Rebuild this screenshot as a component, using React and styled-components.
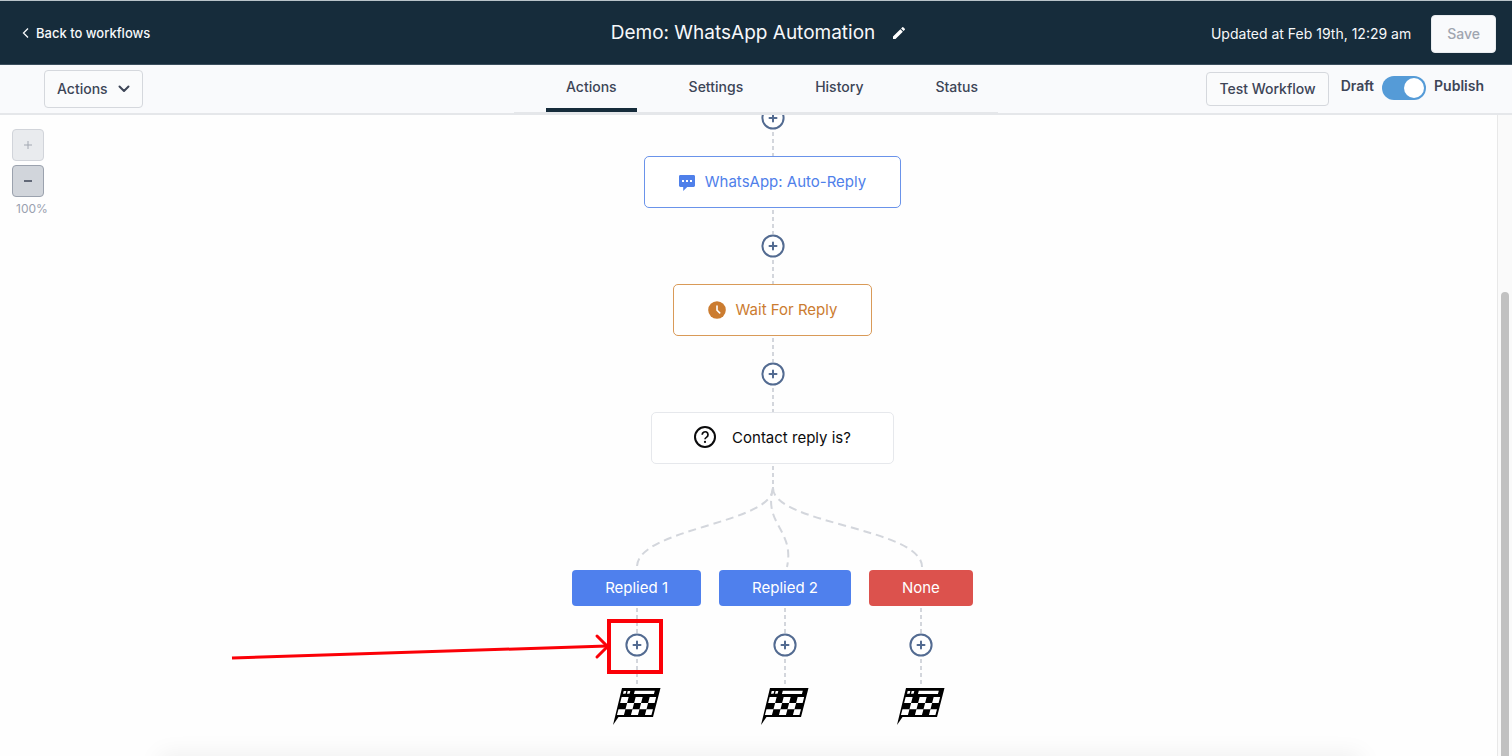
import React, { useState } from "react";
import styled, { createGlobalStyle } from "styled-components";
import { MdEdit } from "react-icons/md";

const GlobalStyle = createGlobalStyle`
  *, *::before, *::after { box-sizing: border-box; }
  body { margin: 0; background: #fefefe; }
  button, input { font: inherit; }
`;

const Page = styled.div`
  display: flex;
  flex-direction: column;
  min-height: 100vh;
  overflow: hidden;
  font-family: Inter, "Liberation Sans", sans-serif;
  font-size: 14px;
  line-height: 20px;
  color: #3d4557;
`;

const Header = styled.header`
  display: grid;
  grid-template-columns: 1fr auto 1fr;
  align-items: center;
  height: 65px;
  padding: 0 16px 0 22px;
  background: #162c3b;
  border-top: 1px solid #b9c3c9;
  border-bottom: 1px solid #3b4f5e;
  color: #f6f8fa;
`;

const BackLink = styled.a`
  display: inline-flex;
  align-items: center;
  gap: 7px;
  justify-self: start;
  color: inherit;
  font-size: 13px;
  font-weight: 500;
  text-decoration: none;
`;

const TitleGroup = styled.div`
  display: flex;
  align-items: center;
  gap: 16px;
`;

const Title = styled.h1`
  margin: 0;
  font-size: 19px;
  line-height: 28px;
  font-weight: 400;
`;

const IconButton = styled.button`
  display: flex;
  padding: 0;
  border: 0;
  background: none;
  color: #fff;
`;

const HeaderEnd = styled.div`
  display: flex;
  align-items: center;
  justify-content: flex-end;
  gap: 20px;
  padding-top: 3px;
`;

const SaveButton = styled.button`
  height: 38px;
  padding: 0 15px;
  border: 1px solid #e9ecef;
  border-radius: 4px;
  background: #f9fafc;
  color: #a0a5b0;
  font-weight: 500;
`;

const Toolbar = styled.div`
  display: grid;
  grid-template-columns: 1fr auto 1fr;
  height: 50px;
  padding: 0 28px;
  background: #f9fafc;
  border-bottom: 2px solid #e5e7ea;
`;

const OutlineButton = styled.button`
  display: flex;
  align-items: center;
  gap: 10px;
  height: ${(p) => p.$height}px;
  padding: 0 12px;
  border: 1px solid #d5d8dd;
  border-radius: 4px;
  background: #fafbfc;
  color: inherit;
  font-weight: 500;
`;

const ToolbarStart = styled.div`
  display: flex;
  align-items: center;
  padding-left: 16px;
`;

const ToolbarEnd = styled.div`
  display: flex;
  align-items: center;
  justify-content: flex-end;
  gap: 12px;
`;

const PublishSwitch = styled.div`
  display: flex;
  align-items: flex-start;
  gap: 8px;
  padding-bottom: 2px;
`;

const SwitchLabel = styled.label`
  font-weight: 600;
`;

const Switch = styled.input`
  appearance: none;
  width: 44px;
  height: 24px;
  margin: 0;
  padding: 2px;
  border-radius: 12px;
  background: ${(p) => (p.checked ? "#559bd7" : "#c5cad2")};

  &::before {
    content: "";
    display: block;
    width: 20px;
    height: 20px;
    margin-left: ${(p) => (p.checked ? "20px" : "0")};
    border-radius: 50%;
    background: #fff;
  }
`;

const Tabs = styled.nav`
  display: flex;
  gap: 32px;
  padding-left: 32px;
  border-bottom: 1px solid #e5e7ea;
`;

const Tab = styled.a`
  padding: 12px 20px 0;
  border-bottom: 4px solid ${(p) => (p.$active ? "#162c3b" : "transparent")};
  color: inherit;
  font-weight: 500;
  text-decoration: none;
`;

const Workspace = styled.div`
  display: flex;
  flex: 1;
`;

const Canvas = styled.main`
  position: relative;
  display: flex;
  flex: 1;
  overflow: hidden;

  &::after {
    content: "";
    position: absolute;
    top: 100%;
    left: 160px;
    right: 136px;
    height: 20px;
    box-shadow: 0 0 24px rgba(0, 0, 0, 0.08);
  }
`;

const ZoomPanel = styled.div`
  display: flex;
  flex-direction: column;
  gap: 4px;
  width: 48px;
  padding: 14px 0 0 12px;
`;

const ZoomButton = styled.button`
  display: flex;
  align-items: center;
  justify-content: center;
  width: 32px;
  height: 32px;
  padding: 0;
  border: 1px solid #9ba2ae;
  border-radius: 4px;
  background: #d1d5db;
  color: #3d4557;

  &:disabled {
    border-color: #d1d4da;
    background: #e9ebee;
    color: #a3a8b2;
  }
`;

const ZoomLevel = styled.span`
  padding-left: 4px;
  font-size: 12px;
  line-height: 16px;
  color: #9aa1b0;
`;

const Flow = styled.div`
  display: flex;
  flex: 1;
  flex-direction: column;
  align-items: center;
  margin-top: -9px;
`;

const Connector = styled.div`
  width: 2px;
  height: ${(p) => p.$length}px;
  background: repeating-linear-gradient(transparent 0 2px, #d3d6dc 2px 6px, transparent 6px 7px);
`;

const AddStep = styled.button`
  display: flex;
  padding: 0;
  border: 0;
  border-radius: 50%;
  background: none;
  color: #536b91;
`;

const tones = {
  message: { border: "#6a93ea", text: "#4f80ea" },
  wait: { border: "#d99a58", text: "#cb7c30" },
  condition: { border: "#e6e8ec", text: "#0b0b0c" },
};

const Node = styled.button`
  display: flex;
  align-items: center;
  gap: ${(p) => (p.$tone === "condition" ? 16 : 10)}px;
  height: 52px;
  padding: 0 ${(p) => (p.$tone === "condition" ? 42 : 34)}px;
  border: 1px solid ${(p) => tones[p.$tone].border};
  border-radius: 5px;
  background: #fff;
  color: ${(p) => tones[p.$tone].text};
  font-size: 15px;
  line-height: 24px;
`;

const Fork = styled.svg`
  display: block;
  width: 400px;
  height: 80px;
  overflow: visible;
`;

const Branches = styled.div`
  display: flex;
  gap: 18px;
`;

const Branch = styled.section`
  display: flex;
  flex-direction: column;
  align-items: center;
`;

const BranchButton = styled.button`
  height: 36px;
  padding: 0 33px;
  border: 0;
  border-radius: 4px;
  background: ${(p) => (p.$danger ? "#dc524d" : "#4f80ed")};
  color: #fff;
  font-size: 15px;
  line-height: 24px;
`;

const StepSlot = styled.div`
  position: relative;
`;

const BranchEnd = styled.div`
  display: flex;
  padding-top: 4px;
`;

const Callout = styled.svg`
  position: absolute;
  top: -15px;
  left: -394px;
  pointer-events: none;
`;

const ScrollTrack = styled.div`
  display: flex;
  width: 15px;
  padding: 177px 3px 0;
  border-left: 1px solid #e8e8e8;
  background: #fafafa;
`;

const ScrollThumb = styled.div`
  flex: 1;
  border-radius: 4px 4px 0 0;
  background: #c1c1c1;
`;

const PlusCircle = () => (
  <svg width="24" height="24" viewBox="0 0 24 24" fill="none" stroke="currentColor" strokeWidth="2">
    <circle cx="12" cy="12" r="10.6" fill="#fff" />
    <path d="M12 8.500v7M8.500 12h7" strokeLinecap="round" />
  </svg>
);

const ChatIcon = () => (
  <svg width="16" height="18" viewBox="0 -1 16 18">
    <path
      fill="currentColor"
      d="M1.4 1h13.2c.8 0 1.4.6 1.4 1.4v9.2c0 .8-.6 1.4-1.4 1.4H8.2L4.2 17v-4H1.4C.6 13 0 12.400 0 11.600V2.400C0 1.600.6 1 1.400 1Z"
    />
    <path fill="#fff" d="M3 6h2v2H3zM7 6h2v2H7zM11 6h2v2h-2z" />
  </svg>
);

const ClockIcon = () => (
  <svg width="18" height="18" viewBox="0 0 18 18" fill="none">
    <circle cx="9" cy="9" r="8.800" fill="currentColor" />
    <path d="M9 5v4.200l2.700 2.700" stroke="#fff" strokeWidth="1.600" strokeLinecap="round" />
  </svg>
);

const QuestionIcon = () => (
  <svg width="22" height="26" viewBox="1 1 22 26" fill="none" stroke="currentColor" strokeWidth="2">
    <circle cx="12" cy="13" r="10" />
    <path d="M9.200 10.700a2.900 2.900 0 1 1 4.500 2.400c-1.100.7-1.700 1.100-1.700 2.200" strokeWidth="1.700" />
    <circle cx="12" cy="17.900" r="1.100" fill="currentColor" stroke="none" />
  </svg>
);

const FlagIcon = () => (
  <svg width="48" height="38" viewBox="0 0 48 38">
    <path d="M9 0h38.500L40 29H5.500L0 37Z" fill="#000" />
    <g fill="#fff" transform="skewX(-14.600)">
      <path d="M11.500 3h2.600v2.800h-2.600zM15.500 3h2.600v2.800h-2.600zM22.500 2.700h20v3.300h-20z" />
      <path d="M11 9h7v5.900h-7zM25 9h7v5.900h-7zM39 9h6.500v5.900H39z" />
      <path d="M18 14.900h7v6.300h-7zM32 14.900h7v6.300h-7z" />
      <path d="M11 21.200h7v5.900h-7zM25 21.200h7v5.900h-7zM39 21.200h6.500v5.900H39z" />
    </g>
  </svg>
);

const AddButton = () => (
  <AddStep type="button" aria-label="Add step">
    <PlusCircle />
  </AddStep>
);

const tabs = ["Actions", "Settings", "History", "Status"];

const steps = [
  { tone: "message", label: "WhatsApp: Auto-Reply", Icon: ChatIcon },
  { tone: "wait", label: "Wait For Reply", Icon: ClockIcon },
  { tone: "condition", label: "Contact reply is?", Icon: QuestionIcon },
];

const branches = [
  { label: "Replied 1", highlighted: true },
  { label: "Replied 2" },
  { label: "None", danger: true },
];

export default function App() {
  const [published, setPublished] = useState(true);

  return (
    <Page>
      <GlobalStyle />
      <Header>
        <BackLink href="#workflows">
          <svg width="7" height="12" viewBox="0 0 7 12" fill="none" stroke="currentColor" strokeWidth="1.300">
            <path d="M6 1.500 1.500 6 6 10.500" />
          </svg>
          Back to workflows
        </BackLink>
        <TitleGroup>
          <Title>Demo: WhatsApp Automation</Title>
          <IconButton type="button" aria-label="Rename workflow">
            <MdEdit size={16} />
          </IconButton>
        </TitleGroup>
        <HeaderEnd>
          <span>Updated at Feb 19th, 12:29 am</span>
          <SaveButton type="button" disabled>
            Save
          </SaveButton>
        </HeaderEnd>
      </Header>

      <Toolbar>
        <ToolbarStart>
          <OutlineButton type="button" $height={38}>
            Actions
            <svg width="12" height="8" viewBox="0 0 12 8" fill="none" stroke="currentColor" strokeWidth="2">
              <path d="m1.500 1.500 4.500 4.500 4.500-4.500" strokeLinecap="round" strokeLinejoin="round" />
            </svg>
          </OutlineButton>
        </ToolbarStart>
        <Tabs>
          {tabs.map((tab, i) => (
            <Tab key={tab} href={`#${tab.toLowerCase()}`} $active={i === 0}>
              {tab}
            </Tab>
          ))}
        </Tabs>
        <ToolbarEnd>
          <OutlineButton type="button" $height={34}>
            Test Workflow
          </OutlineButton>
          <PublishSwitch>
            <SwitchLabel htmlFor="publish">Draft</SwitchLabel>
            <Switch
              id="publish"
              type="checkbox"
              role="switch"
              checked={published}
              onChange={(e) => setPublished(e.target.checked)}
            />
            <SwitchLabel htmlFor="publish">Publish</SwitchLabel>
          </PublishSwitch>
        </ToolbarEnd>
      </Toolbar>

      <Workspace>
        <Canvas>
          <ZoomPanel>
            <ZoomButton type="button" aria-label="Zoom in" disabled>
              <svg width="8" height="8" viewBox="0 0 8 8" stroke="currentColor">
                <path d="M4 0v8M0 4h8" />
              </svg>
            </ZoomButton>
            <ZoomButton type="button" aria-label="Zoom out">
              <svg width="10" height="8" viewBox="0 0 10 8" stroke="currentColor" strokeWidth="1.500">
                <path d="M1 4h8" />
              </svg>
            </ZoomButton>
            <ZoomLevel>100%</ZoomLevel>
          </ZoomPanel>

          <Flow>
            {steps.map(({ tone, label, Icon }) => (
              <React.Fragment key={label}>
                <AddButton />
                <Connector $length={26} />
                <Node type="button" $tone={tone}>
                  <Icon />
                  {label}
                </Node>
                <Connector $length={26} />
              </React.Fragment>
            ))}
            <Fork viewBox="0 0 400 80" fill="none" stroke="#d3d6dc" strokeWidth="2" strokeDasharray="8 5">
              <path d="M200-2C200 34 64 38 64 77" />
              <path d="M200-2C190 34 222 40 214 77" />
              <path d="M200-2C200 34 349 38 349 77" />
            </Fork>
            <Branches>
              {branches.map(({ label, danger, highlighted }) => (
                <Branch key={label}>
                  <BranchButton type="button" $danger={danger}>
                    {label}
                  </BranchButton>
                  <Connector $length={27} />
                  <StepSlot>
                    <AddButton />
                    {highlighted && (
                      <Callout width="432" height="58" viewBox="0 0 432 58" fill="none" stroke="#fb0007">
                        <rect x="378" y="3" width="52" height="51" strokeWidth="4" />
                        <path d="M1 40 376 28" strokeWidth="3" />
                        <path d="m366 18 10.500 10.500L366 39" strokeWidth="3" strokeLinecap="round" />
                      </Callout>
                    )}
                  </StepSlot>
                  <Connector $length={27} />
                  <BranchEnd>
                    <FlagIcon />
                  </BranchEnd>
                </Branch>
              ))}
            </Branches>
          </Flow>
        </Canvas>
        <ScrollTrack>
          <ScrollThumb />
        </ScrollTrack>
      </Workspace>
    </Page>
  );
}
